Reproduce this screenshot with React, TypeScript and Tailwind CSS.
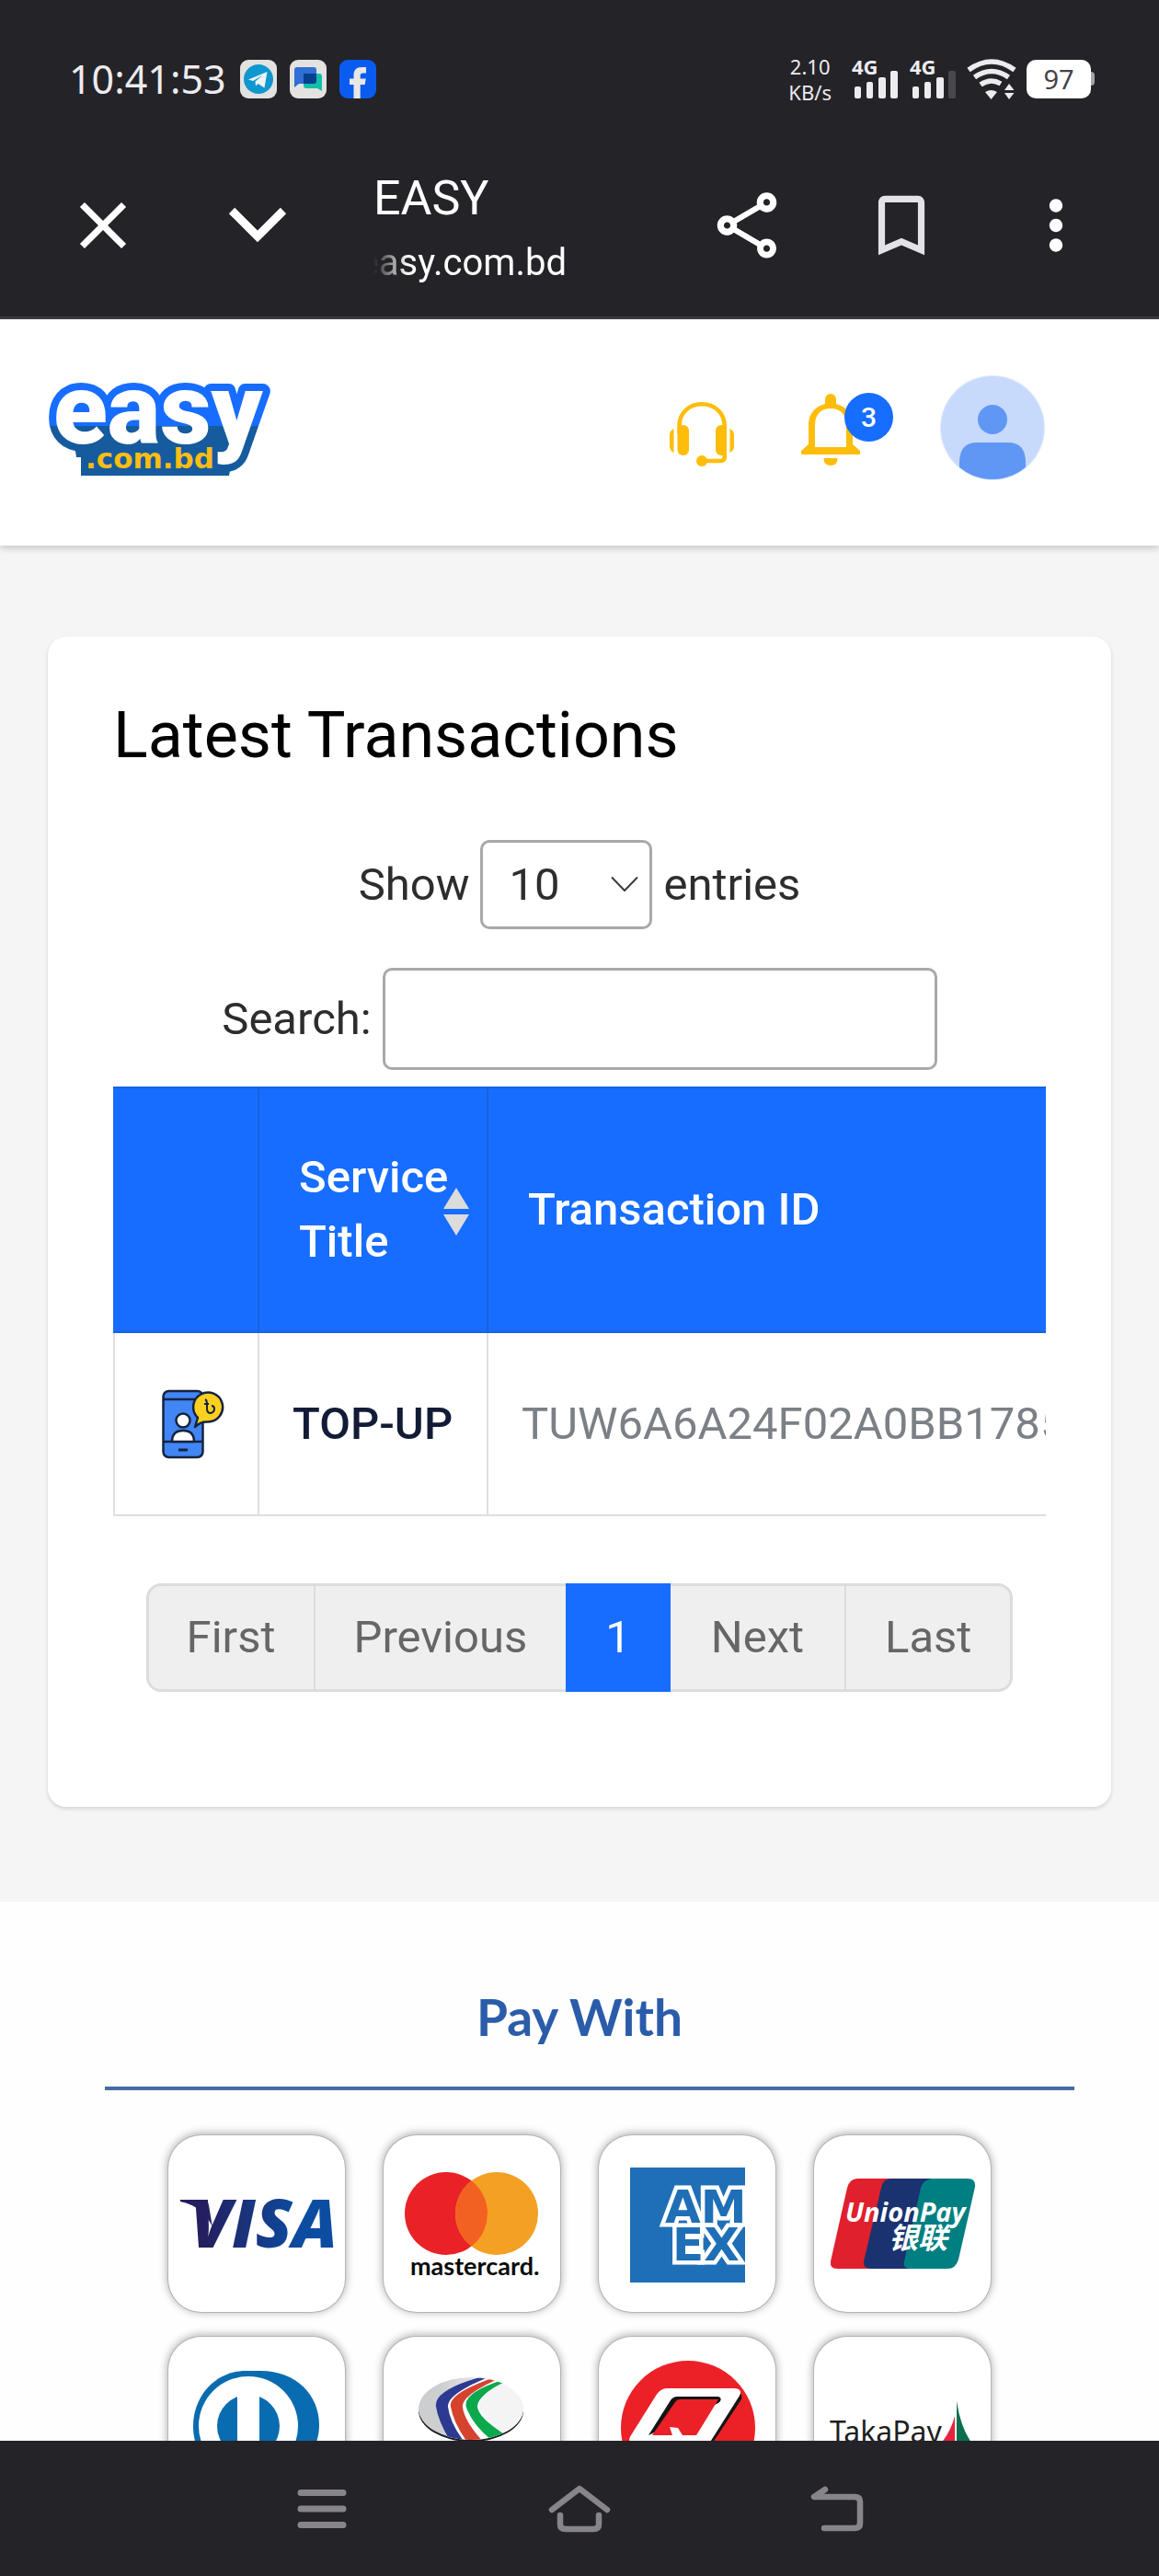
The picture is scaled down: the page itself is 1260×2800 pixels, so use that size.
import { useState } from "react";
import {
  MdClose,
  MdMoreVert,
  MdOutlineBookmarkBorder,
  MdOutlineShare,
} from "react-icons/md";

const transactions = [
  { id: "TUW6A6A24F02A0BB1785", service: "TOP-UP" },
];

function TelegramIcon() {
  return (
    <svg viewBox="0 0 40 42" className="w-10 h-[42px]" aria-label="Telegram">
      <rect width="40" height="42" rx="9" fill="#e4e2e0" />
      <ellipse cx="20" cy="21" rx="16" ry="16" fill="#0f97cf" />
      <path d="M9 21.500L29.500 13 26.500 30.500 19.500 26 17 28.500 16.500 23.500 25 16.500 14 23Z" fill="#eef3f5" />
    </svg>
  );
}

function MessagesIcon() {
  return (
    <svg viewBox="0 0 40 42" className="w-10 h-[42px]" aria-label="Messages">
      <rect width="40" height="42" rx="9" fill="#e4e2e0" />
      <path d="M8 8h18a3 3 0 0 1 3 3v15H10l-5 4V11a3 3 0 0 1 3-3Z" fill="#2f6fd6" />
      <path d="M16 15h16a3 3 0 0 1 3 3v16l-5-3H18a3 3 0 0 1-3-3V16Z" fill="#12bfa9" />
      <path d="M15 15h14v8a3 3 0 0 1-3 3H15Z" fill="#063f8f" />
    </svg>
  );
}

function FacebookIcon() {
  return (
    <svg viewBox="0 0 40 42" className="w-10 h-[42px]" aria-label="Facebook">
      <rect width="40" height="42" rx="9" fill="#0a5cf0" />
      <path d="M15.500 42V27H11v-6.500h4.500V17c0-6 3-9 8.500-9h5v6.500h-3.500c-2 0-2.800 1-2.800 2.800v3.200h6l-1 6.500h-5v15Z" fill="#e9e7e6" />
    </svg>
  );
}

function Signal({ weak }: { weak?: boolean }) {
  return (
    <svg viewBox="0 0 50 44" className="h-11 w-[50px] overflow-visible" aria-hidden="true">
      <text x="0" y="17" fontFamily="Noto Sans, sans-serif" fontWeight="700" fontSize="22" fill="#ecebee">4G</text>
      <g fill="#ecebee">
        <rect x="3" y="30" width="7" height="13" rx="2" />
        <rect x="16" y="25" width="7" height="18" rx="2" />
        <rect x="29" y="20" width="8" height="23" rx="2" />
        <rect x="42" y="13" width="8" height="30" rx="2" fill={weak ? "#49484c" : "#ecebee"} />
      </g>
    </svg>
  );
}

function WifiIcon() {
  return (
    <svg viewBox="0 0 54 44" className="w-[54px] h-11" fill="none" stroke="#ecebee" strokeWidth="5.500" aria-label="Wi-Fi">
      <path d="M2 12Q27-6 52 12" />
      <path d="M8.500 20Q27 7 45.500 20" />
      <path d="M15 28Q26 20.500 37 27" />
      <path d="M20 36q6.500-4 13 0l-6.500 8Z" fill="#ecebee" stroke="none" />
      <path d="M41 34l5-7 5.500 7ZM41 37h10.500l-5.500 7Z" fill="#ecebee" stroke="none" />
    </svg>
  );
}

function StatusBar() {
  return (
    <div className="flex h-[171px] items-center justify-between pl-[75px] pr-[70px] font-['Noto_Sans',sans-serif] text-[#ecebee]">
      <div className="flex items-center gap-[14px]">
        <span className="mr-px text-[43px] leading-none">10:41:53</span>
        <TelegramIcon />
        <MessagesIcon />
        <FacebookIcon />
      </div>
      <div className="flex items-center">
        <div className="mr-[22px] text-center text-[22px] leading-7">
          <div>2.10</div>
          <div>KB/s</div>
        </div>
        <div className="flex gap-[13px]">
          <Signal />
          <Signal weak />
        </div>
        <div className="ml-3">
          <WifiIcon />
        </div>
        <div className="ml-[11px] flex items-center">
          <div className="flex h-[42px] w-[70px] items-center justify-center rounded-[10px] bg-white text-[29px] text-[#444347]">97</div>
          <div className="h-[15px] w-1 rounded-r bg-[#a5a4a8]" />
        </div>
      </div>
    </div>
  );
}

function BrowserToolbar() {
  return (
    <div className="flex h-[148px] items-center px-7 text-white">
      <button aria-label="Close" className="flex w-[168px] justify-center">
        <MdClose size={86} />
      </button>
      <button aria-label="Minimize" className="flex w-[168px] justify-center">
        <svg viewBox="0 0 64 40" className="w-16 h-10" fill="none" stroke="currentColor" strokeWidth="9">
          <path d="M4 4L32 32 60 4" />
        </svg>
      </button>
      <div className="flex min-w-0 flex-1 flex-col pl-[42px] pt-[10px] font-['Roboto',sans-serif]">
        <span className="text-[52px] leading-[72px]">EASY</span>
        <span className="flex w-[210px] justify-end overflow-hidden text-[40px] leading-[68px] [mask-image:linear-gradient(to_right,transparent,black_18%)]">
          easy.com.bd
        </span>
      </div>
      <button aria-label="Share" className="flex w-[168px] justify-center">
        <MdOutlineShare size={86} />
      </button>
      <button aria-label="Bookmark" className="flex w-[168px] justify-center text-[#e3e2e6]">
        <MdOutlineBookmarkBorder size={86} />
      </button>
      <button aria-label="More" className="flex w-[168px] justify-center">
        <MdMoreVert size={86} />
      </button>
    </div>
  );
}

function EasyLogo() {
  return (
    <svg viewBox="0 0 242 108" className="h-[108px] w-[242px] overflow-visible" role="img" aria-label="easy.com.bd">
      <defs>
        <linearGradient id="logoBlue" gradientUnits="userSpaceOnUse" x1="0" y1="0" x2="0" y2="108">
          <stop offset="0.480" stopColor="#176dff" />
          <stop offset="0.480" stopColor="#155b9e" />
        </linearGradient>
      </defs>
      <path d="M35 84h165l-4 22H35Z" fill="#155b9e" />
      <path d="M20 20h190l-18 66H30Z" fill="url(#logoBlue)" />
      <text
        x="5"
        y="71"
        fontFamily="Roboto, sans-serif"
        fontWeight="900"
        fontSize="108"
        stroke="url(#logoBlue)"
        strokeWidth="16"
        strokeLinejoin="round"
        paintOrder="stroke"
        fill="#fff"
      >
        easy
      </text>
      <text x="40" y="98" fontFamily="DejaVu Sans, sans-serif" fontWeight="700" fontSize="31" fill="#fdbd14">.com.bd</text>
    </svg>
  );
}

function HeadsetIcon() {
  return (
    <svg viewBox="0 0 70 70" className="w-[70px] h-[70px]" fill="#fdbd0a">
      <path d="M10.500 34V26C10.500 12 21 2.300 35 2.300S59.700 12 59.700 26V60Q59.700 64 55.500 64H36" fill="none" stroke="#fdbd0a" strokeWidth="4.500" />
      <rect x="8.500" y="25" width="12.500" height="33" rx="6" />
      <path d="M56 25h6v33h-6a6 6 0 0 1-6-6V31a6 6 0 0 1 6-6Z" />
      <path d="M4.500 29v26Q0 53 0 48V36Q0 31 4.500 29ZM65.500 29v26Q70 53 70 48V36Q70 31 65.500 29Z" />
      <circle cx="35" cy="64" r="6" />
    </svg>
  );
}

function BellIcon() {
  return (
    <svg viewBox="0 0 64 78" className="w-16 h-[78px]" fill="#fdbd0a">
      <path d="M26 11V6a6 6 0 0 1 12 0v5C50 14 56 23 56 33V55L64 62V66H0V62L8 55V33C8 23 14 14 26 11ZM15 58H49V34C49 23 43 16 32 16S15 23 15 34Z" fillRule="evenodd" />
      <path d="M24.500 70h15q0 8-7.500 8t-7.500-8Z" />
    </svg>
  );
}

function Avatar() {
  return (
    <svg viewBox="0 0 114 114" className="w-[114px] h-[114px]">
      <clipPath id="avatarClip">
        <circle cx="57" cy="57" r="56" />
      </clipPath>
      <circle cx="57" cy="57" r="57" fill="#dfeafd" />
      <circle cx="57" cy="57" r="56" fill="#c7dafc" />
      <g clipPath="url(#avatarClip)" fill="#6097f4">
        <circle cx="57" cy="48" r="16" />
        <path d="M21 114V95Q21 73 40 73H74Q93 73 93 95V114Z" />
      </g>
    </svg>
  );
}

function SiteHeader() {
  return (
    <header className="relative flex items-center justify-between bg-white pb-[71px] pl-[53px] pr-[124px] pt-[61px] shadow-[0_4px_6px_rgba(0,0,0,0.15)]">
      <a href="#home">
        <EasyLogo />
      </a>
      <div className="flex items-center">
        <button aria-label="Support" className="mt-[14px]">
          <HeadsetIcon />
        </button>
        <button aria-label="Notifications" className="relative ml-[73px] mt-1">
          <BellIcon />
          <span className="absolute -right-9 -top-px flex size-[53px] items-center justify-center rounded-full bg-[#176dff] text-[30px] font-medium text-white">
            3
          </span>
        </button>
        <button aria-label="Account" className="ml-[87px]">
          <Avatar />
        </button>
      </div>
    </header>
  );
}

function TopUpIcon() {
  return (
    <svg viewBox="0 0 68 76" className="w-[68px] h-[76px]" stroke="#15243f" strokeWidth="2.500" strokeLinejoin="round">
      <rect x="1.500" y="2" width="43" height="72" rx="6" fill="#4285f4" />
      <path d="M1.500 11H40M1.500 57H44" fill="none" />
      <path d="M18 66h10" strokeWidth="3" />
      <circle cx="23" cy="34" r="7.500" fill="#fff" />
      <path d="M11 57Q11 45 23 45T35 57Z" fill="#fff" />
      <path d="M36 41l3-10A16 16 0 1 1 50 35.500Q42 35 36 41Z" fill="#fdd020" />
      <path d="M47 11q2 1 2 4v6q0 5 4 5 4-1 4-4.500t-3-3.500M46 16h5" fill="none" strokeWidth="2" />
    </svg>
  );
}

function TransactionsTable() {
  return (
    <div className="mt-[18px] overflow-hidden">
      <table className="w-max table-fixed border-separate border-spacing-0 text-left text-[49px] leading-[70px]">
        <colgroup>
          <col className="w-[159px]" />
          <col className="w-[249px]" />
          <col className="w-[760px]" />
        </colgroup>
        <thead>
          <tr className="h-[268px] bg-[#176dff] text-white">
            <th className="border-y-2 border-r-2 border-[#1862de]" aria-label="Icon" />
            <th className="relative border-y-2 border-r-2 border-[#1862de] pl-[43px] font-medium">
              Service
              <br />
              Title
              <svg viewBox="0 0 30 54" className="absolute right-[18px] top-[107px] h-[54px] w-[30px]" fill="#dcdcdc">
                <path d="M15 1L29 24H1ZM1 30H29L15 53Z" />
              </svg>
            </th>
            <th className="border-y-2 border-[#1862de] pl-[43px] font-medium">Transaction ID</th>
          </tr>
        </thead>
        <tbody>
          {transactions.map((row) => (
            <tr key={row.id} className="h-[199px]">
              <td className="border-x-2 border-b-2 border-[#dfdfe1] pl-[51px]">
                <TopUpIcon />
              </td>
              <td className="border-b-2 border-r-2 border-[#dfdfe1] pl-9 font-medium text-[#131c36]">{row.service}</td>
              <td className="border-b-2 border-[#dfdfe1] pl-9 text-[#7b8086]">{row.id}</td>
            </tr>
          ))}
        </tbody>
      </table>
    </div>
  );
}

function Pagination() {
  return (
    <nav className="mt-[73px] flex h-[118px] justify-center text-[49px] text-[#666]">
      <button className="rounded-l-2xl border-[3px] border-r-2 border-[#dcdcdc] bg-[#efefef] px-[41px]">First</button>
      <button className="border-y-[3px] border-[#dcdcdc] bg-[#efefef] px-[42px]">Previous</button>
      <button className="bg-[#176dff] px-[43px] text-white">1</button>
      <button className="border-y-[3px] border-r-2 border-[#dcdcdc] bg-[#efefef] px-[44px]">Next</button>
      <button className="rounded-r-2xl border-[3px] border-l-0 border-[#dcdcdc] bg-[#efefef] px-[42px]">Last</button>
    </nav>
  );
}

function LatestTransactions() {
  const [pageSize, setPageSize] = useState("10");
  const [search, setSearch] = useState("");

  return (
    <section className="bg-[#f5f5f5] px-[52px] pb-[103px] pt-[99px]">
      <div className="rounded-[20px] bg-white px-[71px] pb-[125px] pt-[67px] shadow-[0_2px_4px_rgba(0,0,0,0.15)]">
        <h1 className="text-[70px] leading-[80px] text-black">Latest Transactions</h1>

        {/* Table controls */}
        <div className="mt-[74px] flex items-center justify-center gap-3 text-[49px] text-[#2d2d2f]">
          <label htmlFor="page-size">Show</label>
          <div className="relative">
            <select
              id="page-size"
              value={pageSize}
              onChange={(e) => setPageSize(e.target.value)}
              className="block h-[97px] w-[187px] appearance-none rounded-[10px] border-[3px] border-[#a9a9a9] bg-white pl-7"
            >
              <option>10</option>
              <option>25</option>
              <option>50</option>
            </select>
            <svg viewBox="0 0 30 18" className="pointer-events-none absolute right-[15px] top-[39px] h-[18px] w-[30px]" fill="none" stroke="#3c3c3c" strokeWidth="2">
              <path d="M1 1.500L15 16 29 1.500" />
            </svg>
          </div>
          <span>entries</span>
        </div>
        <div className="mt-[42px] flex items-center justify-center gap-3 text-[49px] text-[#2d2d2f]">
          <label htmlFor="search">Search:</label>
          <input
            id="search"
            type="search"
            value={search}
            onChange={(e) => setSearch(e.target.value)}
            className="h-[111px] w-[603px] rounded-[10px] border-[3px] border-[#a9a9a9] px-5"
          />
        </div>

        <TransactionsTable />
        <Pagination />
      </div>
    </section>
  );
}

function VisaLogo() {
  return (
    <svg viewBox="0 0 192 192">
      <defs>
        <linearGradient id="visaBlue" gradientUnits="userSpaceOnUse" x1="13" y1="0" x2="180" y2="0">
          <stop offset="0.150" stopColor="#241f5e" />
          <stop offset="0.800" stopColor="#0c4da2" />
        </linearGradient>
      </defs>
      <path d="M13 70H39Q43 71 44 76L48 100Q38 77 13 72Z" fill="url(#visaBlue)" />
      <text x="24" y="122" fontFamily="Open Sans, sans-serif" fontWeight="800" fontStyle="italic" fontSize="73" fill="url(#visaBlue)">VISA</text>
    </svg>
  );
}

function MastercardLogo() {
  return (
    <svg viewBox="0 0 192 192">
      <clipPath id="mcLeft">
        <circle cx="68" cy="85" r="45" />
      </clipPath>
      <circle cx="68" cy="85" r="45" fill="#ea2127" />
      <circle cx="123" cy="85" r="45" fill="#f4a023" />
      <circle cx="123" cy="85" r="45" fill="#f26122" clipPath="url(#mcLeft)" />
      <text x="29" y="152" fontFamily="Lato, sans-serif" fontWeight="700" fontSize="27" fill="#0a0a0a">mastercard.</text>
    </svg>
  );
}

function AmexLogo() {
  return (
    <svg viewBox="0 0 192 192">
      <clipPath id="amexClip">
        <rect x="34" y="35" width="125" height="125" />
      </clipPath>
      <g clipPath="url(#amexClip)">
        <rect x="34" y="35" width="125" height="125" fill="#1f6fb6" />
        <g fontFamily="DejaVu Sans, sans-serif" fontWeight="700" fontSize="50" fill="#1f6fb6" stroke="#fff" strokeWidth="9" paintOrder="stroke">
          <text x="80" y="136">EX</text>
          <text x="72" y="95">AM</text>
        </g>
      </g>
    </svg>
  );
}

function UnionPayLogo() {
  return (
    <svg viewBox="0 0 192 192">
      <path d="M47 47H85L62 145H25Q17 145 18 137L36 57Q39 47 47 47Z" fill="#e0202c" />
      <path d="M84 47H128L105 145H62Q53 145 54 137L73 57Q75 47 84 47Z" fill="#1a3370" />
      <path d="M130 47H167Q176 47 175 56L157 135Q154 145 145 145H105Q96 145 98 137L116 57Q119 47 130 47Z" fill="#007f82" />
      <g fill="#fff" fontWeight="700" fontStyle="italic">
        <text x="34" y="94" fontFamily="Open Sans, sans-serif" fontSize="29">UnionPay</text>
        <text x="81" y="123" fontFamily="Noto Sans CJK SC, sans-serif" fontSize="32">银联</text>
      </g>
    </svg>
  );
}

function DinersLogo() {
  return (
    <svg viewBox="0 0 192 192">
      <path d="M84 37H100C140 37 164 64 164 96S138 157 98 157H86C50 157 27 130 27 97S52 37 84 37Z" fill="#0a6cb0" />
      <circle cx="87" cy="97" r="54" fill="#fff" />
      <circle cx="87" cy="97" r="34" fill="#0a6cb0" />
      <rect x="75" y="60" width="24" height="74" fill="#fff" />
    </svg>
  );
}

function NexusLogo() {
  return (
    <svg viewBox="0 0 192 192">
      <defs>
        <linearGradient id="nexusGray" x1="0" y1="0" x2="1" y2="0">
          <stop offset="0.200" stopColor="#cdced0" />
          <stop offset="0.900" stopColor="#fdfdfd" />
        </linearGradient>
        <clipPath id="nexusClip">
          <ellipse cx="95" cy="78" rx="57" ry="34" />
        </clipPath>
      </defs>
      <ellipse cx="95" cy="80" rx="57" ry="34" fill="#1d1d22" />
      <ellipse cx="95" cy="77" rx="57" ry="34" fill="#fff" />
      <g clipPath="url(#nexusClip)">
        <ellipse cx="95" cy="78" rx="57" ry="34" fill="url(#nexusGray)" />
        <path d="M108 43Q54 58 58 76 61 98 74 116H128L131 48Z" fill="#fff" />
        <path d="M108 43Q54 58 57 76 60 94 74 116H89Q72 94 70 76 69 62 114 44Z" fill="#2c3a92" />
        <path d="M118 45Q70 62 73 76 76 94 92 116H110Q87 91 86 76 85 64 122 47Z" fill="#d5432f" />
        <path d="M126 48Q85 62 90 77 97 96 117 112L132 106Q103 88 102 76 102 64 130 51Z" fill="#0ba84c" />
        <path d="M132 49Q103 62 104 76 108 90 134 108H160V40Z" fill="#f4f4f5" />
      </g>
    </svg>
  );
}

function QCashLogo() {
  return (
    <svg viewBox="0 0 192 192">
      <circle cx="97" cy="99" r="73" fill="#ec2127" />
      <path d="M74 59H148Q157 60 155 68L122 118H114L150 62Z" fill="#151515" />
      <path d="M74 56H146Q157 56 153 64L120 116H36Q31 113 35 107L62 64Q67 56 74 56Z" fill="#fff" />
      <path d="M85 65H130Q134 66 132 70L130 72 54 107 78 69Q81 65 85 65Z" fill="#151515" />
      <path d="M88 68H130L106 107H91L86 99 77 98 80 107H58L83 71Q85 68 88 68Z" fill="#ec2127" />
    </svg>
  );
}

function TakaPayLogo() {
  return (
    <svg viewBox="0 0 192 192">
      <text x="17" y="115" fontFamily="Noto Sans, sans-serif" fontSize="32" fill="#1e1e1e">TakaPay</text>
      <path d="M153 86V120H134Q148 106 153 86Z" fill="#e5243f" />
      <path d="M155 70V120H175Q160 103 155 70Z" fill="#08704f" />
    </svg>
  );
}

const paymentMethods = [
  { name: "Visa", Logo: VisaLogo },
  { name: "Mastercard", Logo: MastercardLogo },
  { name: "American Express", Logo: AmexLogo },
  { name: "UnionPay", Logo: UnionPayLogo },
  { name: "Diners Club", Logo: DinersLogo },
  { name: "Nexus", Logo: NexusLogo },
  { name: "Q-Cash", Logo: QCashLogo },
  { name: "TakaPay", Logo: TakaPayLogo },
];

function PayWith() {
  return (
    <section className="bg-[#fefefe] pt-[91px]">
      <h2 className="text-center font-['Lato',sans-serif] text-[55px] font-bold leading-[68px] text-[#2a5caa]">Pay With</h2>
      <hr className="ml-[114px] mr-[92px] mt-[42px] border-0 border-t-4 border-[#446ca8]" />
      <ul className="mt-[49px] grid grid-cols-[repeat(4,192px)] justify-center gap-x-[42px] gap-y-[27px]">
        {paymentMethods.map(({ name, Logo }) => (
          <li key={name} aria-label={name} className="size-48 rounded-[36px] bg-white shadow-[0_0_0_1px_#b4b4b4,0_-1px_8px_2px_rgba(0,0,0,0.28)]">
            <Logo />
          </li>
        ))}
      </ul>
    </section>
  );
}

function SystemNav() {
  return (
    <nav className="relative flex h-[147px] shrink-0 items-center justify-center bg-[#242328] text-[#87858a]">
      <button aria-label="Recent apps" className="flex w-[280px] justify-center">
        <svg viewBox="0 0 54 44" className="w-[54px] h-11" stroke="currentColor" strokeWidth="7" strokeLinecap="round">
          <path d="M4 4.500H50M4 22H50M4 39.500H50" />
        </svg>
      </button>
      <button aria-label="Home" className="flex w-[280px] justify-center">
        <svg viewBox="0 0 68 52" className="w-[68px] h-[52px]" fill="none" stroke="currentColor" strokeWidth="6.500" strokeLinecap="round" strokeLinejoin="round">
          <path d="M4 27L34 4 64 27" />
          <path d="M13 33V43Q13 48 19 48H49Q55 48 55 43V33" />
        </svg>
      </button>
      <button aria-label="Back" className="flex w-[280px] justify-center">
        <svg viewBox="0 0 58 50" className="w-[58px] h-[50px]" fill="none" stroke="currentColor" strokeWidth="6.500" strokeLinecap="round" strokeLinejoin="round">
          <path d="M16 4L4 12H48Q54 12 54 17V41Q54 46 48 46H15" />
        </svg>
      </button>
    </nav>
  );
}

export default function App() {
  return (
    <div className="flex h-screen flex-col overflow-hidden bg-white font-['Roboto',sans-serif]">
      <div className="shrink-0 border-b-[3px] border-[#3b3a3f] bg-[#242328] pb-[25px]">
        <StatusBar />
        <BrowserToolbar />
      </div>

      {/* Page content */}
      <main className="min-h-0 flex-1 overflow-hidden">
        <SiteHeader />
        <LatestTransactions />
        <PayWith />
      </main>

      <SystemNav />
    </div>
  );
}
